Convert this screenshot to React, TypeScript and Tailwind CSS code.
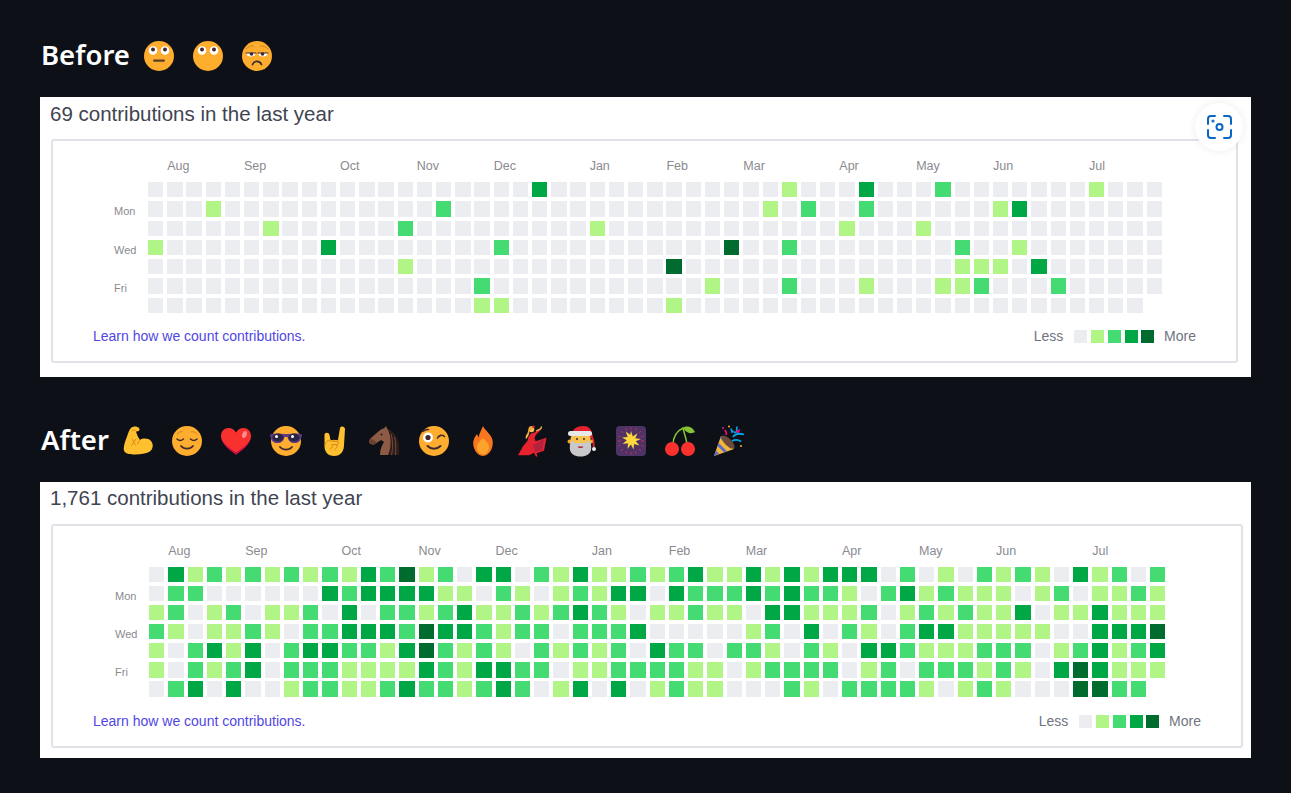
import React from "react";

const cellColors = ["bg-[#ebedf0]", "bg-[#b1f586]", "bg-[#44dc72]", "bg-[#00a845]", "bg-[#006b2e]"];

const blank = "0".repeat(53);

// [row, column, level] of the few days that had something on them
const beforeMarks: number[][] = [
  [0, 20, 3], [0, 33, 1], [0, 37, 3], [0, 41, 2], [0, 49, 1],
  [1, 3, 1], [1, 15, 2], [1, 32, 1], [1, 34, 2], [1, 37, 2], [1, 44, 1], [1, 45, 3],
  [2, 6, 1], [2, 13, 2], [2, 23, 1], [2, 36, 1], [2, 40, 1],
  [3, 0, 1], [3, 9, 3], [3, 18, 2], [3, 30, 4], [3, 33, 2], [3, 42, 2], [3, 45, 1],
  [4, 13, 1], [4, 27, 4], [4, 42, 1], [4, 43, 1], [4, 44, 1], [4, 46, 3],
  [5, 17, 2], [5, 29, 1], [5, 33, 2], [5, 37, 1], [5, 41, 1], [5, 42, 1], [5, 43, 2], [5, 47, 2],
  [6, 17, 1], [6, 18, 1], [6, 27, 1],
];

const beforeRows = [0, 1, 2, 3, 4, 5, 6].map((r) => {
  const row = blank.split("");
  beforeMarks.filter((m) => m[0] === r).forEach((m) => (row[m[1]] = String(m[2])));
  return (r === 6 ? row.slice(0, 52) : row).join("");
});

const afterRows = [
  "031212121213241203" + "3021311212311313133" + "3020102121031202",
  "022000000323333110" + "2101213303222323221" + "0231211101201121",
  "120120112030221231" + "1212321011211033111" + "2012121130113111",
  "210112102233324332" + "1220222300000120302" + "1023311111003334",
  "102313023322134212" + "1021212032202210210" + "3321112220123123",
  "102123022211113213" + "3220112222110122220" + "1202221210343111",
  "023030012211232212" + "3201303012110002102" + "222101210004422",
];

const months = [
  ["Aug", 1], ["Sep", 5], ["Oct", 10], ["Nov", 14], ["Dec", 18], ["Jan", 23],
  ["Feb", 27], ["Mar", 31], ["Apr", 36], ["May", 40], ["Jun", 44], ["Jul", 49],
] as [string, number][];

const days: [string, number][] = [["Mon", 2], ["Wed", 4], ["Fri", 6]];

const Face = ({ children }: { children?: React.ReactNode }) => (
  <svg viewBox="0 0 32 32" className="w-8 h-8 shrink-0">
    <circle cx="16" cy="16" r="15" fill="#ffad2e" />
    {children}
  </svg>
);

const Icon = ({ children }: { children?: React.ReactNode }) => (
  <svg viewBox="0 0 32 32" className="w-8 h-8 shrink-0">
    {children}
  </svg>
);

const RollEyes = () => (
  <>
    <circle cx="10" cy="10.500" r="4.300" fill="#fff" />
    <circle cx="22" cy="10.500" r="4.300" fill="#fff" />
    <circle cx="10" cy="9.500" r="2" fill="#402a32" />
    <circle cx="22" cy="9.500" r="2" fill="#402a32" />
  </>
);

const emojiBefore = [
  <Face key="0">
    <RollEyes />
    <rect x="10" y="19.500" width="12" height="2.200" rx="1.100" fill="#5a3d2b" />
  </Face>,
  <Face key="1">
    <RollEyes />
  </Face>,
  <Face key="2">
    <path d="M5 9c2-2.500 5-3.500 7.500-3M27 9c-2-2.500-5-3.500-7.500-3" stroke="#c07a24" strokeWidth="0.800" fill="none" strokeLinecap="round" />
    <path d="M5.500 13h9a4.500 3.500 0 0 1-9 0zM17.500 13h9a4.500 3.500 0 0 1-9 0z" fill="#fff" />
    <circle cx="10.500" cy="14" r="1.800" fill="#402a32" />
    <circle cx="21.500" cy="14" r="1.800" fill="#402a32" />
    <path d="M5 13h10M17 13h10" stroke="#402a32" strokeWidth="1.100" fill="none" strokeLinecap="round" />
    <path d="M11.500 24.500c1-2.500 2.500-3.200 4.500-3.200s3.500.7 4.500 3.200" stroke="#402a32" strokeWidth="1.800" fill="none" strokeLinecap="round" />
  </Face>,
];

const emojiAfter = [
  <Icon key="muscle">
    <path d="M9 3c2-2 6-2 8 0 1 1 .5 3-1 3.200l-2 .3c.8 3 2.200 6 4 8.500 3-2 8-2 11 1 3 3.500 2 9-2 11-3 1.500-8 2.500-14 2.500-5 0-10-.500-11-4-.8-3 1-9 3-14 1-3 2-6.500 4-8.500z" fill="#ffc02f" />
    <path d="M10 6c1-.8 2.500-1 3.500-.5M10 14l3.500 6M14 14l-4.500 6.500M18 15c-1 1-2 2.500-2.300 4" stroke="#e08a1a" strokeWidth="1" fill="none" strokeLinecap="round" />
  </Icon>,
  <Face key="relieved">
    <path d="M6 9c1.500-1.800 3.500-2.500 5.500-2.300M26 9c-1.500-1.800-3.500-2.500-5.500-2.300" stroke="#c07a24" strokeWidth="0.800" fill="none" strokeLinecap="round" />
    <path d="M6 14c1.800 1.800 4.500 1.800 6.500 0M19.500 14c2 1.800 4.700 1.800 6.500 0" stroke="#402a32" strokeWidth="1.500" fill="none" strokeLinecap="round" />
    <path d="M10 21c3 3.500 9 3.500 12 0" stroke="#402a32" strokeWidth="1.800" fill="none" strokeLinecap="round" />
  </Face>,
  <Icon key="heart">
    <path d="M16 29.500C9 24.500 1 18.500 1 11c0-5 3.500-8 7.500-8 3.500 0 6 2 7.500 4.500C17.500 5 20 3 23.500 3 27.500 3 31 6 31 11c0 7.500-8 13.500-15 18.500z" fill="#f8312f" />
    <path d="M16 29.500C9 24.500 1 18.500 1 11c0 6 8 12 15 16.500C23 23 31 17 31 11c0 7.500-8 13.500-15 18.500z" fill="#ca0b4a" />
    <ellipse cx="24.500" cy="9.500" rx="2.200" ry="3.500" transform="rotate(25 24.500 9.500)" fill="#ff8f8f" />
  </Icon>,
  <Icon key="cool">
    <circle cx="16" cy="16" r="15" fill="#ffad2e" />
    <path d="M0 9.500c3-1 9-1.500 14-.5h4c5-1 11-.5 14 .5l-.5 2.500c-1 4-3 6-7 6s-6-2-7-6h-3c-1 4-3 6-7 6s-6-2-7-6z" fill="#5f3b86" />
    <ellipse cx="8" cy="12.500" rx="5.500" ry="4" fill="#2b2440" />
    <ellipse cx="24" cy="12.500" rx="5.500" ry="4" fill="#2b2440" />
    <circle cx="6.500" cy="11.500" r="1.500" fill="#fff" />
    <circle cx="22.500" cy="11.500" r="1.500" fill="#fff" />
    <path d="M10 22c3 3.500 9 3.500 12 0" stroke="#402a32" strokeWidth="1.800" fill="none" strokeLinecap="round" />
  </Icon>,
  <Icon key="metal">
    <path d="M5.500 10C5.500 7 10 7 10.500 10l1 5 7.500 0 2-12c.5-2.500 5-2 5 1l-1 16c0 6-3 11-10 11-6 0-9.500-4-9.500-10z" fill="#ffc02f" />
    <path d="M6 20c1-4.500 4-5 6-4l6 .5c2 .2 2 3.200 0 3.200l-5-.2M13 19.500c1 1.500.5 3.500-1.500 4.500M18 19.500c.5 2-.5 4-2.500 5.500M15 15v1.500M19 15v1.500" stroke="#d9861a" strokeWidth="1" fill="none" strokeLinecap="round" />
  </Icon>,
  <Icon key="horse">
    <path d="M18 1l2 4c5 1 8 7 9 15v10H12c0-6 2-10 4-13l-3-2-6 4c-3 1.500-6 0-6-2.500 0-1.500 1-2.500 3-4.500l7-6c2-2 4-2.500 5-2.500z" fill="#8c5a45" />
    <path d="M20 5c6 1 11 8 11 17v8H20c3-6 4-16 0-25z" fill="#2f1d1a" />
    <path d="M23 9c2 6 2 14 .5 21M26.500 12c1.500 6 1.500 12 1 18" stroke="#6d4a3a" strokeWidth="1" fill="none" />
    <circle cx="13.500" cy="9.500" r="1" fill="#1c1c1c" />
    <path d="M1 16.500c0 2.500 3 4 6 2.500l2-1.300-5-4c-2 1-3 1.500-3 2.800z" fill="#6b4232" />
  </Icon>,
  <Face key="wink">
    <circle cx="10" cy="12.500" r="5" fill="#fff" />
    <circle cx="10" cy="12.500" r="2.600" fill="#402a32" />
    <path d="M5 6.500c1.500-1.500 3.500-2.200 5.500-2M19.500 13c1.500-3 5-3.500 7-1.500" stroke="#402a32" strokeWidth="1.600" fill="none" strokeLinecap="round" />
    <path d="M9.500 21c3.500 3.500 9.500 3.500 13 0" stroke="#402a32" strokeWidth="2" fill="none" strokeLinecap="round" />
  </Face>,
  <Icon key="fire">
    <path d="M16 1c1.500 4 8 8 9.500 14 1.500 7-3 16-9.500 16S5 22 6.500 15.500c.7-3 2.500-5 3.500-6.500l1.500 3.500C12.500 8 14.500 4.500 16 1z" fill="#f8761f" />
    <path d="M16 13c2.500 2.500 6 5 6 9.500 0 4-3 7-6 7s-6-3-6-7c0-4 3.500-7 6-9.500z" fill="#ffa42b" />
  </Icon>,
  <Icon key="dancer">
    <path d="M15 8.500l4-1.200 5-3.500 1 1-5 5-1.500 3 1 3.500 11-3.500-2.500 13-7.500 2.500 1 3-1.500.5-2-4-5 2.500H2l5-9 4.500-5.500 1-4z" fill="#e5222f" />
    <path d="M17 20l11-6-2 11-7 2z" fill="#b3223f" />
    <circle cx="15.500" cy="4.500" r="2.800" fill="#f4bd4e" />
    <path d="M13 2c2-2 5-1 5 1-2-.5-2.500 1-4 2l-1 4-1.500 3-2-.5 2-3.500z" fill="#e8a43a" />
    <circle cx="17.500" cy="1.800" r="1.200" fill="#e5222f" />
    <path d="M20 6l5-2.500.5-2" stroke="#f4bd4e" strokeWidth="1.300" fill="none" />
    <path d="M12 9l-2 4.500" stroke="#f4bd4e" strokeWidth="1.500" />
  </Icon>,
  <Icon key="santa">
    <path d="M6 10c0-6 5-9 11-9 6 0 9 3 10 12l-3 0-1-3z" fill="#e5222f" />
    <circle cx="28" cy="24" r="2" fill="#eee" />
    <path d="M26 12c1.500 3 2 6 1.800 10" stroke="#e5222f" strokeWidth="2" fill="none" />
    <circle cx="3.500" cy="16.500" r="2" fill="#f5a623" />
    <circle cx="25" cy="16.500" r="2" fill="#f5a623" />
    <rect x="4.500" y="10" width="20" height="13" rx="4" fill="#f8c24e" />
    <rect x="2" y="6" width="24" height="5" rx="2.500" fill="#e8e8e8" />
    <path d="M4.500 17c0-1 1-1 2.500-1h15c1.500 0 2.500 0 2.500 1 .5 2 1 5 .5 8-1 4-4.500 6.500-10.500 6.500S5 29 4 25c-.5-3 0-6 .5-8z" fill="#c9c9c9" />
    <rect x="8" y="13" width="13" height="5" fill="#f8c24e" />
    <circle cx="11" cy="14" r="1" fill="#402a32" />
    <circle cx="18" cy="14" r="1" fill="#402a32" />
    <path d="M11.500 21.500h6c-1 2-5 2-6 0z" fill="#b3223f" />
  </Icon>,
  <Icon key="fireworks">
    <rect x="1" y="1" width="30" height="30" rx="4" fill="#4f3366" />
    <path d="M16 6l1.800 5.500 4.700-3.200-2.200 5 5.700.7-5.200 2.300 3.700 4.200-5.400-1.500-.6 5.500-2.500-5-3.500 4.200.6-5.500-5.500.7 4.200-3.700-4.800-2.800 5.600-.5-1.800-5.300 4.400 3.200z" fill="#ffd83b" />
    <path d="M16 2.500v2M16 27v2.500M3 16h3M26 16h3M6 6l2 2M24 24l2 2M26 6l-2 2M8 24l-2 2M11 3.500l.7 2M21 3.500l-.7 2M11 28.500l.7-2M21 28.500l-.7-2M3.500 11l2 .7M3.500 21l2-.7M28.500 11l-2 .7M28.500 21l-2-.7" stroke="#c9304e" strokeWidth="1" />
  </Icon>,
  <Icon key="cherries">
    <path d="M9 20c0-8 4-14 10-17 1 5 3.500 11 4 17" stroke="#86c232" strokeWidth="1.500" fill="none" />
    <path d="M19 3c3-2.500 9-2 12 4-3 2-8 2-12-4z" fill="#86c232" />
    <circle cx="8" cy="24" r="7" fill="#f8312f" />
    <circle cx="24" cy="24" r="7" fill="#f8312f" />
  </Icon>,
  <Icon key="party">
    <path d="M1 31L8 11l13 13z" fill="#f5b63a" />
    <path d="M1 31l2-5.500 3 3zM4.500 21l6.500 6.500 3-1.300-8-8zM7.500 13.500l10 10 3-.8L8.500 11z" fill="#5b6ec7" />
    <ellipse cx="15" cy="17" rx="3.500" ry="8.500" transform="rotate(-45 15 17)" fill="#6b4a3a" />
    <path d="M20 12c2-3 6-4 11-2.500M19 16c3-1.500 6-1.500 9 .5" stroke="#00a6ed" strokeWidth="1.800" fill="none" />
    <path d="M18 3.500l1 3.500 1.500-1M24 1.500l-.5 5c-.5 1.500-2.500 1-2.500 0" stroke="#00a6ed" strokeWidth="1.600" fill="none" />
    <path d="M12 5c1 1.500 2 3 1 5M27 5l-3 1.500 2 1" stroke="#f70a8d" strokeWidth="1.600" fill="none" />
    <circle cx="10" cy="3" r="1" fill="#f70a8d" />
    <circle cx="28" cy="21" r="1" fill="#ffb02e" />
    <circle cx="16" cy="1.500" r="1" fill="#ffb02e" />
  </Icon>,
];

const Chart = ({ rows, gapClass, boxClass, padClass }: { rows: string[]; gapClass: string; boxClass: string; padClass: string }) => (
  <div className={"flex flex-col h-[224px] border-2 border-[#e0e2e7] rounded-[3px] pt-[17px] ml-[11px] " + boxClass}>
    <div className={"flex " + padClass}>
      <div className="w-[34px] shrink-0" />
      <div className={"grid grid-cols-[repeat(53,15.3px)] h-4 mb-2 text-[12.5px] leading-4 text-[#8a8a90] " + gapClass}>
        {months.map(([name, col]) => (
          <span key={name} className="whitespace-nowrap" style={{ gridColumnStart: col + 1 }}>
            {name}
          </span>
        ))}
      </div>
    </div>
    <div className={"flex " + padClass}>
      <div className={"w-[34px] shrink-0 grid grid-rows-[repeat(7,15.3px)] text-[11px] text-[#8a8a90] " + gapClass}>
        {days.map(([name, row]) => (
          <span key={name} className="leading-[15px] mt-[3px]" style={{ gridRowStart: row }}>
            {name}
          </span>
        ))}
      </div>
      <div className={"grid grid-cols-[repeat(53,15.3px)] grid-rows-[repeat(7,15.3px)] " + gapClass}>
        {rows.map((row, r) =>
          row.split("").map((level, c) => <div key={r + "-" + c} className={cellColors[Number(level)]} />)
        )}
      </div>
    </div>
    <div className="mt-auto mb-[15px] px-[40px] flex items-center justify-between text-sm leading-5">
      <a className="text-[#5046e4]">Learn how we count contributions.</a>
      <div className="flex items-center text-[#6e7480]">
        <span className="mr-[11px]">Less</span>
        {cellColors.map((color) => (
          <div key={color} className={"w-[13px] h-[13px] mr-[3.750px] " + color} />
        ))}
        <span className="ml-[6px]">More</span>
      </div>
    </div>
  </div>
);

const Heading = ({ title, emoji }: { title: string; emoji: React.ReactNode[] }) => (
  <h2 className="flex items-center h-10 gap-[17.300px] font-['Noto_Sans',sans-serif] font-semibold text-[27.5px] text-white">
    <span className="ml-px mr-[-4.300px] pb-[2px]">{title}</span>
    {emoji}
  </h2>
);

export default function App() {
  return (
    <div className="min-h-screen bg-[#0d1117] pt-[36px] px-10 font-['Liberation_Sans',sans-serif]">
      <Heading title="Before" emoji={emojiBefore} />
      <div className="relative mt-[21px] h-[280px] bg-white">
        <p className="pl-[10px] text-[20.5px] leading-[34px] mb-2 text-[#3f4451]">69 contributions in the last year</p>
        <Chart rows={beforeRows} gapClass="gap-x-[3.910px] gap-y-[3.970px]" boxClass="mr-[13px]" padClass="pl-[61px]" />
        <div className="absolute top-[6px] right-2 w-12 h-12 rounded-full bg-white shadow-[0_0_8px_rgba(0,0,0,0.08)] flex items-center justify-center">
          <svg viewBox="0 0 25 24" className="w-[25px] h-6" fill="none" stroke="#0b65c2" strokeWidth="2" strokeLinecap="round">
            <path d="M1 9V4a3 3 0 0 1 3-3h4M17 1h4a3 3 0 0 1 3 3v5M24 15v5a3 3 0 0 1-3 3h-4M8 23H4a3 3 0 0 1-3-3v-5" />
            <circle cx="12.500" cy="12" r="3" />
            <circle cx="6" cy="6" r="0.600" />
          </svg>
        </div>
      </div>
      <div className="mt-[44px]">
        <Heading title="After" emoji={emojiAfter} />
      </div>
      <div className="mt-[21px] h-[276px] bg-white">
        <p className="pl-[10px] text-[20.5px] leading-[32px] mb-[10px] text-[#3f4451]">1,761 contributions in the last year</p>
        <Chart rows={afterRows} gapClass="gap-x-[3.960px] gap-y-[3.760px]" boxClass="mr-2" padClass="pl-[62px]" />
      </div>
    </div>
  );
}
